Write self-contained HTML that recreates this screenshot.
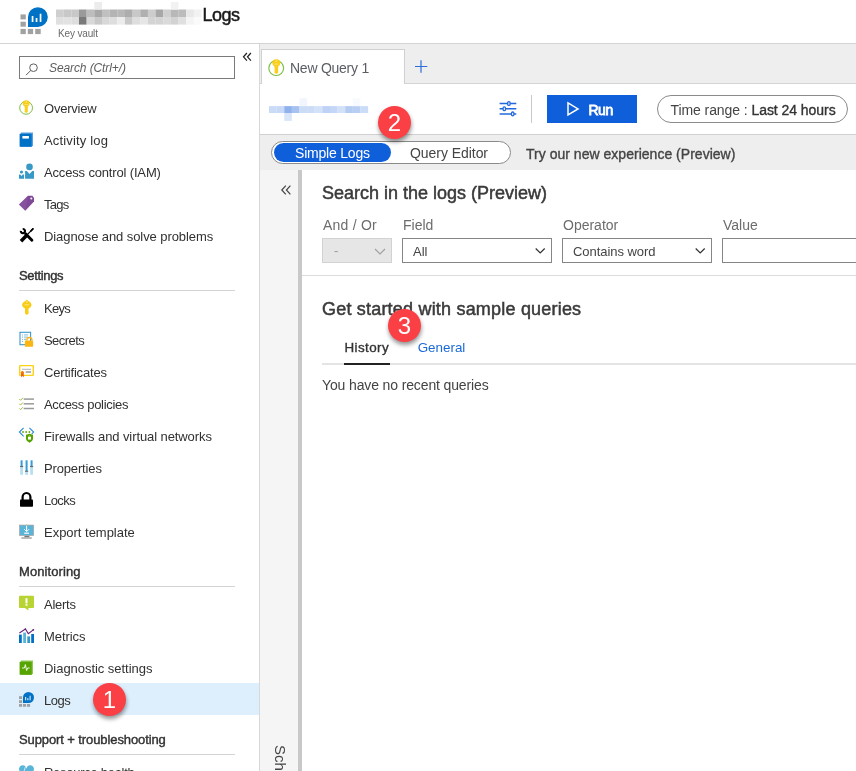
<!DOCTYPE html>
<html><head><meta charset="utf-8"><title>Logs</title>
<style>
*{box-sizing:border-box;margin:0;padding:0}
html,body{width:856px;height:771px;overflow:hidden;background:#fff}
body{font-family:"Liberation Sans",sans-serif;font-size:13px;color:#323130;position:relative}
.abs{position:absolute}
.t{position:absolute;white-space:nowrap;line-height:1;transform-origin:0 50%}
#hdr{left:0;top:0;width:856px;height:44px;border-bottom:1px solid #d4d4d4;background:#fff}
#side{left:0;top:44px;width:259px;height:727px;background:#fff}
#vline{left:259px;top:44px;width:1px;height:727px;background:#d8d8d8}
.mi{position:absolute;left:0;width:259px;height:32px}
.mi.sel::before{content:"";position:absolute;left:0;top:-1px;width:259px;height:32px;background:#ddeffd}
.mi .lbl{position:absolute;left:44px;top:9px;font-size:13px;line-height:16px;white-space:nowrap;color:#323130;letter-spacing:-0.1px}
.mi svg{position:absolute;left:19px;top:8px;width:16px;height:16px;overflow:visible}
.sec{position:absolute;left:19px;font-size:13px;-webkit-text-stroke:0.4px currentColor;color:#323130;white-space:nowrap;line-height:14px;transform-origin:0 50%}
.hr{position:absolute;left:19px;width:216px;height:1px;background:#d4d4d4}
.badge{position:absolute;width:33px;height:33px;border-radius:50%;background:#fa3f45;color:#fff;font-size:24px;line-height:33px;text-align:center;box-shadow:0.5px 3px 4px rgba(0,0,0,.42)}
#search{left:19px;top:56px;width:216px;height:23px;border:1px solid #7a7a7a;background:#fff}
#tabs{left:260px;top:44px;width:596px;height:40px;background:#eeeeee;border-bottom:1px solid #d4d4d4}
#tab1{left:261px;top:49px;width:144px;height:36px;background:#fff;border:1px solid #d0d0d0;border-bottom:none}
#toolbar{left:260px;top:84px;width:596px;height:51px;background:#fff;border-bottom:1px solid #d0d0d0}
#togrow{left:260px;top:135px;width:596px;height:35px;background:#eeeeee}
#strip{left:260px;top:170px;width:38px;height:601px;background:#f5f5f5}
#split{left:298px;top:170px;width:4px;height:601px;background:#c8c8c8}
.sel2{position:absolute;top:238px;height:25px;border:1px solid #868686;background:#fff}
.lab{position:absolute;white-space:nowrap;font-size:14px;line-height:16px;color:#6c6c6c;top:217px}
.sb{-webkit-text-stroke:0.35px currentColor}
#app{position:absolute;left:0;top:0;width:856px;height:771px;overflow:hidden;will-change:transform;background:#fff}
</style></head><body><div id="app">

<div id="hdr" class="abs"></div>
<svg class="abs" style="left:20px;top:6px;overflow:visible" width="30" height="30" viewBox="0 0 30 30">
<g fill="#a0a1a2"><rect x="0.5" y="8.4" width="5.3" height="5"/><rect x="0.5" y="15.7" width="5.3" height="5"/><rect x="0.5" y="22.9" width="5.3" height="5.2"/><rect x="7.8" y="22.9" width="5.3" height="5.2"/><rect x="15.2" y="22.9" width="5.5" height="5.2"/></g>
<path d="M8 21 V11.1 a9.9 9.9 0 1 1 9.9 9.9z" fill="#0072c6"/>
<g fill="#fff"><rect x="11.7" y="10" width="1.7" height="6"/><rect x="15.7" y="12" width="1.7" height="4"/><rect x="19.7" y="7.7" width="1.7" height="8.3"/></g>
</svg>
<svg class="abs" style="left:56px;top:2.4px" width="146" height="23" viewBox="0 0 146 23"><rect x="0.00" y="7.5" width="7.71" height="7.6" fill="#cfcfcf"/><rect x="7.66" y="7.5" width="7.71" height="7.6" fill="#c8c8c8"/><rect x="15.32" y="7.5" width="7.71" height="7.6" fill="#c8c8c8"/><rect x="22.98" y="7.5" width="7.71" height="7.6" fill="#9a9a9a"/><rect x="30.64" y="7.5" width="7.71" height="7.6" fill="#bdbdbd"/><rect x="38.30" y="7.5" width="7.71" height="7.6" fill="#a8a8a8"/><rect x="45.96" y="7.5" width="7.71" height="7.6" fill="#c0c0c0"/><rect x="53.62" y="7.5" width="7.71" height="7.6" fill="#b4b4b4"/><rect x="61.28" y="7.5" width="7.71" height="7.6" fill="#b8b8b8"/><rect x="68.94" y="7.5" width="7.71" height="7.6" fill="#adadad"/><rect x="76.60" y="7.5" width="7.71" height="7.6" fill="#c8c8c8"/><rect x="84.26" y="7.5" width="7.71" height="7.6" fill="#b0b0b0"/><rect x="91.92" y="7.5" width="7.71" height="7.6" fill="#cdcdcd"/><rect x="99.58" y="7.5" width="7.71" height="7.6" fill="#a8a8a8"/><rect x="107.24" y="7.5" width="7.71" height="7.6" fill="#d0d0d0"/><rect x="114.90" y="7.5" width="7.71" height="7.6" fill="#b8b8b8"/><rect x="122.56" y="7.5" width="7.71" height="7.6" fill="#bcbcbc"/><rect x="130.22" y="7.5" width="7.71" height="7.6" fill="#e8e8e8"/><rect x="137.88" y="7.5" width="7.71" height="7.6" fill="#f2f2f2"/><rect x="0.00" y="15" width="7.71" height="7.6" fill="#e0e0e0"/><rect x="7.66" y="15" width="7.71" height="7.6" fill="#e2e2e2"/><rect x="15.32" y="15" width="7.71" height="7.6" fill="#dedede"/><rect x="22.98" y="15" width="7.71" height="7.6" fill="#7a7a7a"/><rect x="30.64" y="15" width="7.71" height="7.6" fill="#d8d8d8"/><rect x="38.30" y="15" width="7.71" height="7.6" fill="#c8c8c8"/><rect x="45.96" y="15" width="7.71" height="7.6" fill="#d8d8d8"/><rect x="53.62" y="15" width="7.71" height="7.6" fill="#dedede"/><rect x="61.28" y="15" width="7.71" height="7.6" fill="#ececec"/><rect x="68.94" y="15" width="7.71" height="7.6" fill="#c8c8c8"/><rect x="76.60" y="15" width="7.71" height="7.6" fill="#dedede"/><rect x="84.26" y="15" width="7.71" height="7.6" fill="#e6e6e6"/><rect x="91.92" y="15" width="7.71" height="7.6" fill="#d4d4d4"/><rect x="99.58" y="15" width="7.71" height="7.6" fill="#d4d4d4"/><rect x="107.24" y="15" width="7.71" height="7.6" fill="#dadada"/><rect x="114.90" y="15" width="7.71" height="7.6" fill="#d2d2d2"/><rect x="122.56" y="15" width="7.71" height="7.6" fill="#e0e0e0"/><rect x="130.22" y="15" width="7.71" height="7.6" fill="#f4f4f4"/><rect x="137.88" y="15" width="7.71" height="7.6" fill="#fafafa"/><rect x="38.30" y="0" width="7.66" height="7.6" fill="#ececec"/><rect x="114.90" y="0" width="7.66" height="7.6" fill="#f2f2f2"/></svg>
<div class="t" style="left:58px;top:28.7px;font-size:10px;color:#6a6a6a;letter-spacing:-0.15px">Key vault</div>
<div class="t sb" style="left:202.5px;top:5.5px;font-size:18px;color:#1b1a19;letter-spacing:-0.55px;-webkit-text-stroke-width:0.5px">Logs</div>

<div id="side" class="abs"></div>
<div id="search" class="abs"></div>
<svg class="abs" style="left:25px;top:61.8px;overflow:visible" width="14" height="14" viewBox="0 0 14 14"><circle cx="8.5" cy="5.7" r="3.8" fill="none" stroke="#605e5c" stroke-width="1"/><path d="M5.8 8.4 L1.1 13.1" stroke="#605e5c" stroke-width="1"/></svg>
<div class="t" style="left:49px;top:62.2px;font-size:12px;font-style:italic;color:#605e5c;letter-spacing:-0.1px">Search (Ctrl+/)</div>
<svg class="abs" style="left:242px;top:52px;overflow:visible" width="10" height="10" viewBox="0 0 10 10"><path d="M4.9 1 L1.5 4.8 L4.9 8.6 M8.9 1 L5.5 4.8 L8.9 8.6" fill="none" stroke="#222" stroke-width="1.25"/></svg>
<div class="mi" style="top:92px"><svg viewBox="0 0 16 16"><circle cx="7.1" cy="7.85" r="6.4" fill="#fff" stroke="#7cbf40" stroke-width="1"/><path d="M7.2 0.2 a3.5 3.3 0 0 1 3.5 3.3 a3.5 3.3 0 0 1 -1.9 2.9 V11.8 L7.2 13 L5.6 11.8 V10.9 L6.1 10.4 L5.6 9.9 V9 L6.1 8.5 L5.6 8 V6.4 a3.5 3.3 0 0 1 -1.9 -2.9 A3.5 3.3 0 0 1 7.2 0.2z" fill="#f9cf1c"/><circle cx="7.2" cy="2" r="0.7" fill="#fdeb9a"/><rect x="5.4" y="4" width="3.6" height="0.9" fill="#fbe070"/></svg><span class="lbl" style="letter-spacing:-0.22px">Overview</span></div>
<div class="mi" style="top:124px"><svg viewBox="0 0 16 16"><path d="M1.8 0.4 L14 0.4 L14 13.4 L12.8 14.8 L1.8 14.8z" fill="#5c9fe0"/><rect x="0.6" y="1.8" width="12.1" height="13" rx="0.6" fill="#0072c6"/><rect x="3.4" y="4" width="6.5" height="2.6" fill="#fff"/></svg><span class="lbl" style="letter-spacing:0.16px">Activity log</span></div>
<div class="mi" style="top:156px"><svg viewBox="0 0 16 16"><circle cx="10.5" cy="2.9" r="3.3" fill="#3999c6"/><path d="M6.1 7 h1.7 l2.7 3 l2.7 -3 h1.8 v7.8 h-8.9z" fill="#3999c6"/><circle cx="2.5" cy="8" r="1.6" fill="#3999c6"/><path d="M0 10.6 h1.2 l1.3 1.4 l1.3 -1.4 h1.2 v4.2 h-5z" fill="#3999c6"/></svg><span class="lbl" style="letter-spacing:-0.16px">Access control (IAM)</span></div>
<div class="mi" style="top:188px"><svg viewBox="0 0 16 16"><path d="M0 8.4 L9 -0.2 H13.3 L15 1.8 V5.6 L6.3 14.8z" fill="#804998"/><path d="M0 8.4 L9 -0.2 L6.3 14.8z" fill="#8d5aa6" opacity="0.45"/><circle cx="12.3" cy="2.5" r="1" fill="#fff"/></svg><span class="lbl" style="letter-spacing:-0.7px">Tags</span></div>
<div class="mi" style="top:220px"><svg viewBox="0 0 16 16"><g stroke="#000" fill="none"><path d="M14.3 0.5 L7.8 7.2" stroke-width="1.1"/><path d="M13.9 0.9 L12 2.9" stroke-width="1.7" stroke-linecap="round"/><path d="M8.2 6.8 L2 13.2" stroke-width="3.5"/><path d="M6.6 5.8 L12.9 12.3" stroke-width="2.9" stroke-linecap="round"/><path d="M3.72 1.01 A2.1 2.1 0 1 1 1.81 2.92" stroke-width="2.1"/></g></svg><span class="lbl" style="letter-spacing:-0.08px">Diagnose and solve problems</span></div>
<div class="mi" style="top:292px"><svg viewBox="0 0 16 16"><path d="M7.8 -0.3 L11.8 2.8 L12.6 5 L11.8 7 L9.6 8.6 V10 L9.2 10.5 L9.6 11 V13.4 L7.8 14.9 L6 13.4 V8.6 L3.8 7 L3 5 L3.8 2.8z" fill="#f8cd17"/><rect x="5.6" y="4.2" width="4.4" height="1.1" fill="#fbe27a"/><circle cx="7.8" cy="2" r="0.7" fill="#fdf0b0"/></svg><span class="lbl" style="letter-spacing:-0.7px">Keys</span></div>
<div class="mi" style="top:324px"><svg viewBox="0 0 16 16"><rect x="1" y="0.3" width="10.6" height="12.4" fill="#fff" stroke="#3e97cb" stroke-width="1.1"/><g fill="#7fb9dc"><rect x="3" y="2.4" width="1" height="1"/><rect x="5" y="2.4" width="4" height="1"/><rect x="3" y="4.6" width="1" height="1"/><rect x="5" y="4.6" width="4" height="1"/><rect x="3" y="6.8" width="1" height="1"/><rect x="5" y="6.8" width="2" height="1"/><rect x="3" y="9" width="1" height="1"/></g><path d="M7.8 8.4 a2.6 2.9 0 0 1 5.2 0" fill="none" stroke="#fcb614" stroke-width="1.4"/><rect x="5.9" y="8.4" width="8.2" height="6.4" rx="0.6" fill="#fcb614"/></svg><span class="lbl" style="letter-spacing:-0.55px">Secrets</span></div>
<div class="mi" style="top:356px"><svg viewBox="0 0 16 16"><rect x="0.7" y="1.6" width="13.6" height="9.8" rx="0.6" fill="#fff" stroke="#fcd116" stroke-width="1.4"/><path d="M3 5.3 H12" stroke="#a0a0a0" stroke-width="0.8"/><path d="M6.6 8 H12" stroke="#a0a0a0" stroke-width="1.6"/><circle cx="3.4" cy="8.8" r="1.7" fill="#ee7d11"/><path d="M2.1 9.5 L2 13.2 L3.4 12 L4.8 13.2 L4.7 9.5z" fill="#e8600c"/></svg><span class="lbl" style="letter-spacing:-0.19px">Certificates</span></div>
<div class="mi" style="top:388px"><svg viewBox="0 0 16 16"><g stroke="#9a9a9a" stroke-width="1.5"><path d="M4.7 3.1 H15"/><path d="M4.7 7.8 H15"/><path d="M4.7 12.5 H15"/></g><g stroke="#9bc53d" stroke-width="1" fill="none"><path d="M0.3 3 L1.6 4.3 L3.9 1.8"/><path d="M0.3 7.7 L1.6 9 L3.9 6.5"/><path d="M0.3 12.4 L1.6 13.7 L3.9 11.2"/></g></svg><span class="lbl" style="letter-spacing:-0.32px">Access policies</span></div>
<div class="mi" style="top:420px"><svg viewBox="0 0 16 16"><g fill="none" stroke="#2f8ed6" stroke-width="1.15"><path d="M4.6 -0.2 L0.4 4 L4.6 8.3"/><path d="M10.4 -0.2 L14.6 4 L12.8 5.8"/></g><circle cx="4" cy="4" r="0.9" fill="#5fa80b"/><circle cx="7.2" cy="4" r="0.9" fill="#5fa80b"/><circle cx="10.4" cy="4" r="0.9" fill="#5fa80b"/><path d="M7 6.8 L10.5 5.8 L14 6.8 V10.6 Q14 13.2 10.5 14.8 Q7 13.2 7 10.6z" fill="#57a300"/><rect x="9" y="9" width="3" height="2.6" fill="#fff"/><path d="M9.6 9 a0.9 1 0 0 1 1.8 0" fill="none" stroke="#fff" stroke-width="0.6"/></svg><span class="lbl" style="letter-spacing:-0.09px">Firewalls and virtual networks</span></div>
<div class="mi" style="top:452px"><svg viewBox="0 0 16 16"><g><rect x="1.2" y="0.4" width="2.8" height="14.4" fill="#b8dff0"/><rect x="6.2" y="0.4" width="2.8" height="14.4" fill="#b8dff0"/><rect x="11.2" y="0.4" width="2.8" height="14.4" fill="#b8dff0"/><rect x="1.8" y="0.4" width="1.6" height="6" fill="#3a9bd6"/><rect x="6.8" y="0.4" width="1.6" height="10.6" fill="#3a9bd6"/><rect x="11.8" y="0.4" width="1.6" height="6" fill="#3a9bd6"/><rect x="1" y="6.2" width="3.2" height="0.9" fill="#555"/><rect x="6" y="10.8" width="3.2" height="0.9" fill="#555"/><rect x="11" y="6.2" width="3.2" height="0.9" fill="#555"/></g></svg><span class="lbl" style="letter-spacing:-0.15px">Properties</span></div>
<div class="mi" style="top:484px"><svg viewBox="0 0 16 16"><path d="M3.6 8 V5 a3.9 4 0 0 1 7.8 0 V8" fill="none" stroke="#000" stroke-width="2.2"/><rect x="1" y="7.4" width="13" height="7.4" rx="0.8" fill="#000"/></svg><span class="lbl" style="letter-spacing:-0.57px">Locks</span></div>
<div class="mi" style="top:516px"><svg viewBox="0 0 16 16"><rect x="0.6" y="1.1" width="14" height="10.3" fill="#59b4d9" stroke="#a0a1a2" stroke-width="0.7"/><rect x="5.4" y="11.9" width="5" height="1.4" fill="#7a7a7a"/><rect x="2.4" y="13.3" width="10.4" height="1.4" fill="#a0a1a2"/><g stroke="#fff" fill="none"><path d="M7.6 1.5 V7.4" stroke-width="1"/><path d="M5.2 5.2 L7.6 7.6 L10 5.2" stroke-width="1"/><path d="M5.2 9.2 H10" stroke-width="1.2"/></g><rect x="7.2" y="0.3" width="0.9" height="1" fill="#b8d432"/></svg><span class="lbl" style="letter-spacing:-0.02px">Export template</span></div>
<div class="mi" style="top:588px"><svg viewBox="0 0 16 16"><path d="M1 -0.2 H14 a1 1 0 0 1 1 1 V10.9 a1 1 0 0 1 -1 1 H9.4 V14.6 L5.9 11.9 H1 a1 1 0 0 1 -1 -1 V0.8 a1 1 0 0 1 1 -1z" fill="#b8d432"/><rect x="6.5" y="2.2" width="2" height="5.2" fill="#fff"/><rect x="6.5" y="8.2" width="2" height="1.5" fill="#fff"/></svg><span class="lbl" style="letter-spacing:-0.26px">Alerts</span></div>
<div class="mi" style="top:620px"><svg viewBox="0 0 16 16"><rect x="0" y="6.6" width="2.8" height="8.4" fill="#0072c6"/><rect x="4.2" y="4.6" width="2.8" height="10.4" fill="#59b4d9"/><rect x="8.3" y="8.4" width="2.8" height="6.6" fill="#3999c6"/><rect x="12.2" y="6" width="2.8" height="9" fill="#0072c6"/><path d="M0.4 5 L6.4 1 L9.3 5.6 L14.6 1.6" fill="none" stroke="#68217a" stroke-width="1.1"/><circle cx="14.3" cy="1.8" r="0.9" fill="#68217a"/><circle cx="6.4" cy="1.1" r="0.8" fill="#68217a"/></svg><span class="lbl" style="letter-spacing:-0.07px">Metrics</span></div>
<div class="mi" style="top:652px"><svg viewBox="0 0 16 16"><path d="M1.8 0.4 L14 0.4 L14 13.4 L12.8 14.8 L1.8 14.8z" fill="#8fc75a"/><rect x="0.6" y="1.8" width="12.1" height="13" rx="0.6" fill="#57a300"/><path d="M3 8 H5.4 L6.4 4.6 L7.6 10.6 L8.6 8 H10.6" fill="none" stroke="#fff" stroke-width="0.9"/></svg><span class="lbl" style="letter-spacing:-0.04px">Diagnostic settings</span></div>
<div class="mi sel" style="top:684px"><svg viewBox="0 0 16 16"><g fill="#a0a1a2"><rect x="0" y="4.2" width="3.1" height="2.8"/><rect x="0" y="8.2" width="3.1" height="2.8"/><rect x="0" y="12" width="3.1" height="2.8"/><rect x="4" y="12" width="3.1" height="2.8"/><rect x="8" y="12" width="3.1" height="2.8"/></g><path d="M4 11 V5.5 a5.5 5.5 0 1 1 5.5 5.5z" fill="#0072c6"/><g fill="#fff"><rect x="6.2" y="5" width="0.95" height="3.3"/><rect x="8.4" y="6.1" width="0.95" height="2.2"/><rect x="10.6" y="3.7" width="0.95" height="4.6"/></g></svg><span class="lbl" style="letter-spacing:-0.5px">Logs</span></div>
<div class="mi" style="top:756px"><svg viewBox="0 0 16 16"><path d="M7.5 4.6 C6.8 0.2 1 0 0.1 4.4 C-0.4 8 3.6 11 7.5 14.6 C11.4 11 15.4 8 14.9 4.4 C14 0 8.2 0.2 7.5 4.6z" fill="#59b4d9"/><path d="M6.5 2.6 L5 7.4" stroke="#fff" stroke-width="0.7"/></svg><span class="lbl" style="letter-spacing:-0.28px">Resource health</span></div>
<div class="sec" style="top:269px;letter-spacing:-0.35px">Settings</div>
<div class="hr" style="top:290px"></div>
<div class="sec" style="top:565px;letter-spacing:0.1px">Monitoring</div>
<div class="hr" style="top:586px"></div>
<div class="sec" style="top:733px;letter-spacing:-0.1px">Support + troubleshooting</div>
<div class="hr" style="top:754px"></div>
<div class="badge" style="left:93px;top:683px">1</div>
<div id="vline" class="abs"></div>

<div id="tabs" class="abs"></div>
<div id="tab1" class="abs"></div>
<svg class="abs" style="left:267.9px;top:58.9px;overflow:visible" width="18.5" height="18.5" viewBox="0 0 16 16"><circle cx="7.1" cy="7.85" r="6.4" fill="#fff" stroke="#7cbf40" stroke-width="1"/><path d="M7.2 0.2 a3.5 3.3 0 0 1 3.5 3.3 a3.5 3.3 0 0 1 -1.9 2.9 V11.8 L7.2 13 L5.6 11.8 V10.9 L6.1 10.4 L5.6 9.9 V9 L6.1 8.5 L5.6 8 V6.4 a3.5 3.3 0 0 1 -1.9 -2.9 A3.5 3.3 0 0 1 7.2 0.2z" fill="#f9cf1c"/><circle cx="7.2" cy="2" r="0.7" fill="#fdeb9a"/><rect x="5.4" y="4" width="3.6" height="0.9" fill="#fbe070"/></svg>
<div class="t" style="left:290px;top:61px;font-size:14px;color:#5a5d64;letter-spacing:-0.25px">New Query 1</div>
<svg class="abs" style="left:415px;top:60px" width="13" height="13" viewBox="0 0 13 13"><path d="M6 0.3 V12.7 M0 6.5 H12.3" stroke="#2a6fdb" stroke-width="1.2"/></svg>

<div id="toolbar" class="abs"></div>
<svg class="abs" style="left:269px;top:98px" width="100" height="24" viewBox="0 0 100 24"><rect x="0.00" y="8.1" width="7.67" height="6.9" fill="#c9dbf7"/><rect x="7.62" y="8.1" width="7.67" height="6.9" fill="#c7d9f6"/><rect x="15.24" y="8.1" width="7.67" height="6.9" fill="#8fb2ec"/><rect x="22.86" y="8.1" width="7.67" height="6.9" fill="#a5c2f0"/><rect x="30.48" y="8.1" width="7.67" height="6.9" fill="#cbdcf7"/><rect x="38.10" y="8.1" width="7.67" height="6.9" fill="#cbdcf7"/><rect x="45.72" y="8.1" width="7.67" height="6.9" fill="#d4e2f9"/><rect x="53.34" y="8.1" width="7.67" height="6.9" fill="#bdd2f4"/><rect x="60.96" y="8.1" width="7.67" height="6.9" fill="#c5d7f6"/><rect x="68.58" y="8.1" width="7.67" height="6.9" fill="#d2e0f8"/><rect x="76.20" y="8.1" width="7.67" height="6.9" fill="#b4cbf2"/><rect x="83.82" y="8.1" width="7.67" height="6.9" fill="#b8cff3"/><rect x="91.44" y="8.1" width="7.67" height="6.9" fill="#cbdcf7"/><rect x="30.48" y="0.2" width="7.62" height="7.9" fill="#f1f5fd"/><rect x="83.82" y="0.2" width="7.62" height="7.9" fill="#f7fafe"/><rect x="15.24" y="15" width="7.62" height="7.9" fill="#d9e6fa"/></svg>
<svg class="abs" style="left:499px;top:100px;overflow:visible" width="18" height="17" viewBox="0 0 18 17"><g stroke="#2468dc" stroke-width="1.5" fill="#fff"><path d="M0.6 3.5 H17.3 M0.6 8.7 H17.3 M0.6 13.9 H17.3"/><rect x="8.7" y="1.6" width="2.4" height="3.8" rx="1.2" stroke-width="1.3"/><rect x="4.1" y="6.8" width="2.4" height="3.8" rx="1.2" stroke-width="1.3"/><rect x="12.5" y="12" width="2.4" height="3.8" rx="1.2" stroke-width="1.3"/></g></svg>
<div class="abs" style="left:531px;top:95px;width:1px;height:28px;background:#c8c8c8"></div>
<div class="abs" style="left:547px;top:95px;width:90px;height:28px;background:#0f5fdb"></div>
<svg class="abs" style="left:567px;top:102px;overflow:visible" width="12" height="14" viewBox="0 0 12 14"><path d="M1 0.9 L11 6.9 L1 12.9z" fill="none" stroke="#fff" stroke-width="1.5" stroke-linejoin="miter"/></svg>
<div class="t" style="left:588.4px;top:102.5px;font-size:14px;color:#fff;letter-spacing:-0.4px;-webkit-text-stroke:0.8px #fff">Run</div>
<div class="abs" style="left:657px;top:95px;width:191px;height:28px;border:1px solid #8a8a8a;border-radius:14px;background:#fff"></div>
<div class="t" style="left:670.5px;top:102.5px;font-size:14px;color:#444;letter-spacing:-0.08px">Time range : <span class="sb" style="color:#333;letter-spacing:-0.05px">Last 24 hours</span></div>
<div class="badge" style="left:378px;top:106px;z-index:5">2</div>

<div id="togrow" class="abs"></div>
<div class="abs" style="left:271px;top:141px;width:240px;height:23px;border:1px solid #8a8a8a;border-radius:12px;background:#fff"></div>
<div class="abs" style="left:274px;top:143px;width:117px;height:19px;border-radius:9.5px;background:#0f5fdb"></div>
<div class="t" style="left:295px;top:146px;font-size:14px;color:#fff;letter-spacing:-0.2px">Simple Logs</div>
<div class="t" style="left:410px;top:146px;font-size:14px;color:#444;letter-spacing:-0.05px">Query Editor</div>
<div class="t sb" style="left:526px;top:146.5px;font-size:14px;color:#444;letter-spacing:0.02px">Try our new experience (Preview)</div>

<div id="strip" class="abs"></div>
<div id="split" class="abs"></div>
<svg class="abs" style="left:281px;top:185px;overflow:visible" width="10" height="10" viewBox="0 0 10 10"><path d="M4.8 0.6 L0.8 5 L4.8 9.4 M9.4 0.6 L5.4 5 L9.4 9.4" fill="none" stroke="#444" stroke-width="1.2"/></svg>
<div class="t" style="left:268px;top:748px;font-size:15px;color:#444;transform:rotate(90deg);transform-origin:0 0;left:287.5px;top:745.3px">Schema and Filter</div>

<div class="t sb" style="left:322px;top:184px;font-size:18px;color:#3b3a39;letter-spacing:0;-webkit-text-stroke-width:0.5px">Search in the logs (Preview)</div>
<div class="lab" style="left:323px;letter-spacing:0.22px">And / Or</div>
<div class="lab" style="left:403px">Field</div>
<div class="lab" style="left:563px">Operator</div>
<div class="lab" style="left:723px">Value</div>
<div class="sel2" style="left:322px;width:70px;background:#e6e6e6;border-color:#d2d2d2"></div>
<div class="t" style="left:334px;top:244px;font-size:13px;color:#9a9a9a">-</div>
<svg class="abs" style="left:374px;top:248px" width="12" height="8" viewBox="0 0 12 8"><path d="M1 1 L6 6 L11 1" fill="none" stroke="#a0a0a0" stroke-width="1.15"/></svg>
<div class="sel2" style="left:402px;width:150px"></div>
<div class="t" style="left:413px;top:244.5px;font-size:13px;color:#444">All</div>
<svg class="abs" style="left:534px;top:247px" width="12" height="8" viewBox="0 0 12 8"><path d="M1.7 1.5 L6.2 6 L10.7 1.5" fill="none" stroke="#333" stroke-width="1.2"/></svg>
<div class="sel2" style="left:562px;width:150px"></div>
<div class="t" style="left:573px;top:244.5px;font-size:13px;color:#444;letter-spacing:-0.05px">Contains word</div>
<svg class="abs" style="left:694px;top:247px" width="12" height="8" viewBox="0 0 12 8"><path d="M1.7 1.5 L6.2 6 L10.7 1.5" fill="none" stroke="#333" stroke-width="1.2"/></svg>
<div class="sel2" style="left:722px;width:150px"></div>
<div class="abs" style="left:302px;top:275px;width:554px;height:1px;background:#dcdcdc"></div>

<div class="t sb" style="left:322px;top:299.7px;font-size:18px;color:#3b3a39;letter-spacing:0.2px;-webkit-text-stroke-width:0.5px">Get started with sample queries</div>
<div class="t sb" style="left:344.5px;top:340.6px;font-size:13.4px;color:#333;letter-spacing:0.42px">History</div>
<div class="t" style="left:417.7px;top:340.6px;font-size:13.4px;color:#1a6ad8">General</div>
<div class="abs" style="left:322px;top:363px;width:534px;height:2px;background:#e4e4e4"></div>
<div class="abs" style="left:344px;top:362.7px;width:46px;height:2.3px;background:#222"></div>
<div class="t" style="left:322px;top:378.4px;font-size:14px;color:#444;letter-spacing:-0.13px">You have no recent queries</div>
<div class="badge" style="left:388px;top:309px">3</div>

</div></body></html>
